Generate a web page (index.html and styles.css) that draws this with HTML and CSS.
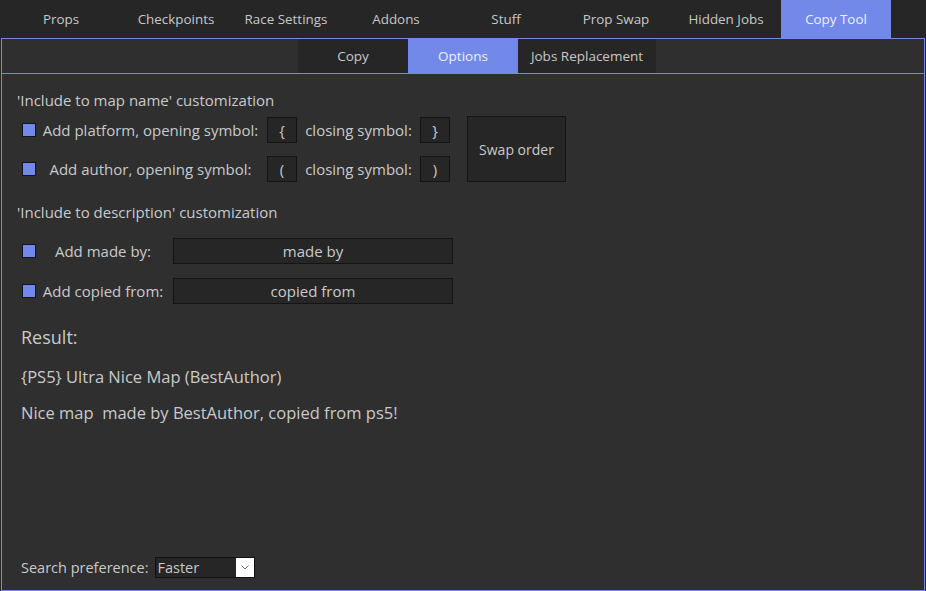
FILE: index.html
```html
<!DOCTYPE html>
<html>
<head>
<meta charset="utf-8">
<link rel="stylesheet" href="styles.css">
</head>
<body>
<nav class="tabs">
  <div class="tab tab-first">Props</div>
  <div class="tab">Checkpoints</div>
  <div class="tab">Race Settings</div>
  <div class="tab">Addons</div>
  <div class="tab">Stuff</div>
  <div class="tab">Prop Swap</div>
  <div class="tab">Hidden Jobs</div>
  <div class="tab active">Copy Tool</div>
</nav>
<main class="panel">
  <div class="subtabs">
    <div class="subtab">Copy</div>
    <div class="subtab active">Options</div>
    <div class="subtab subtab-wide">Jobs Replacement</div>
  </div>
  <section class="content">
    <div class="heading">'Include to map name' customization</div>
    <div class="name-block">
      <div class="name-rows">
        <div class="row">
          <span class="check"></span>
          <span class="label label-open">Add platform, opening symbol:</span>
          <span class="sym">{</span>
          <span class="label label-close">closing symbol:</span>
          <span class="sym">}</span>
        </div>
        <div class="row">
          <span class="check"></span>
          <span class="label label-open">Add author, opening symbol:</span>
          <span class="sym">(</span>
          <span class="label label-close">closing symbol:</span>
          <span class="sym">)</span>
        </div>
      </div>
      <div class="swap">Swap order</div>
    </div>
    <div class="heading heading-desc">'Include to description' customization</div>
    <div class="desc-rows">
      <div class="row">
        <span class="check"></span>
        <span class="label label-desc">Add made by:</span>
        <span class="field">made by</span>
      </div>
      <div class="row">
        <span class="check"></span>
        <span class="label label-desc">Add copied from:</span>
        <span class="field">copied from</span>
      </div>
    </div>
    <div class="result-title">Result:</div>
    <div class="result-line result-first">{PS5} Ultra Nice Map (BestAuthor)</div>
    <div class="result-line">Nice map&nbsp; made by BestAuthor, copied from ps5!</div>
  </section>
  <div class="footer">
    <span class="footer-label">Search preference:</span>
    <div class="select">
      <span class="select-value">Faster</span>
      <span class="select-arrow">
        <svg width="8" height="5" viewBox="0 0 8 5"><path d="M0.5 0.5 L4 4 L7.5 0.5" fill="none" stroke="#6a6a6a" stroke-width="1"/></svg>
      </span>
    </div>
  </div>
</main>
</body>
</html>
```
FILE: styles.css
```css
* { box-sizing: border-box; }
html, body { margin: 0; padding: 0; }
body {
  width: 926px;
  height: 591px;
  overflow: hidden;
  background: #262626;
  font-family: "Open Sans", "Noto Sans", sans-serif;
  color: #c8cacc;
}
.tabs {
  display: flex;
  height: 38px;
  padding-left: 1px;
}
.tab {
  width: 110px;
  display: flex;
  align-items: center;
  justify-content: center;
  font-size: 13.4px;
  color: #c6c8ca;
}
.tab-first { width: 120px; }
.tab.active { background: #7289ea; color: #eef1ff; }

.panel {
  margin-left: 1px;
  width: 924px;
  height: 553px;
  border: 1px solid #7289ea;
  background: #2f2f2f;
  display: flex;
  flex-direction: column;
}
.subtabs {
  display: flex;
  height: 35px;
  padding-left: 296px;
  border-bottom: 1px solid #7289ea;
}
.subtab {
  width: 110px;
  background: #262626;
  display: flex;
  align-items: center;
  justify-content: center;
  font-size: 13.5px;
  color: #c6c8ca;
}
.subtab-wide { width: 138px; }
.subtab.active { background: #7289ea; color: #eef1ff; }

.content {
  padding: 16px 0 0 15px;
  font-size: 15px;
}
.heading { line-height: 20px; height: 20px; }
.name-block {
  display: flex;
  align-items: flex-start;
  margin-top: 6px;
}
.name-rows {
  display: flex;
  flex-direction: column;
  gap: 13px;
  margin-top: 1px;
}
.row {
  display: flex;
  align-items: center;
  height: 26px;
}
.check {
  width: 14px;
  height: 14px;
  margin-left: 5px;
  background: #7289ea;
  border: 1px solid #151515;
  flex: none;
}
.label { text-align: center; white-space: nowrap; }
.label-open { width: 229px; }
.label-close { width: 123px; }
.sym {
  width: 30px;
  height: 26px;
  margin-left: 2px;
  background: #262626;
  border: 1px solid #141414;
  display: flex;
  align-items: center;
  justify-content: center;
}
.label-close + .sym { margin-left: 0; }
.swap {
  width: 99px;
  height: 66px;
  margin-left: 17px;
  background: #262626;
  border: 1px solid #141414;
  display: flex;
  align-items: center;
  justify-content: center;
  font-size: 14px;
}
.heading-desc { margin-top: 20px; }
.desc-rows {
  display: flex;
  flex-direction: column;
  gap: 14px;
  margin-top: 16px;
}
.label-desc { width: 134px; }
.field {
  width: 280px;
  height: 26px;
  margin-left: 3px;
  background: #262626;
  border: 1px solid #141414;
  display: flex;
  align-items: center;
  justify-content: center;
}
.result-title {
  margin-top: 21px;
  padding-left: 4px;
  font-size: 18px;
  line-height: 24px;
}
.result-line {
  padding-left: 4px;
  font-size: 16.5px;
  line-height: 22px;
  margin-top: 14px;
}
.result-first { margin-top: 17px; }

.footer {
  margin-top: auto;
  padding: 0 0 12px 19px;
  display: flex;
  align-items: center;
  font-size: 14.5px;
}
.footer-label { margin-right: 6px; }
.select {
  width: 100px;
  height: 21px;
  background: #262626;
  border: 1px solid #111;
  display: flex;
  align-items: stretch;
}
.select-value {
  flex: 1;
  padding-left: 2px;
  line-height: 19px;
}
.select-arrow {
  width: 18px;
  background: #ffffff;
  display: flex;
  align-items: center;
  justify-content: center;
}
```
